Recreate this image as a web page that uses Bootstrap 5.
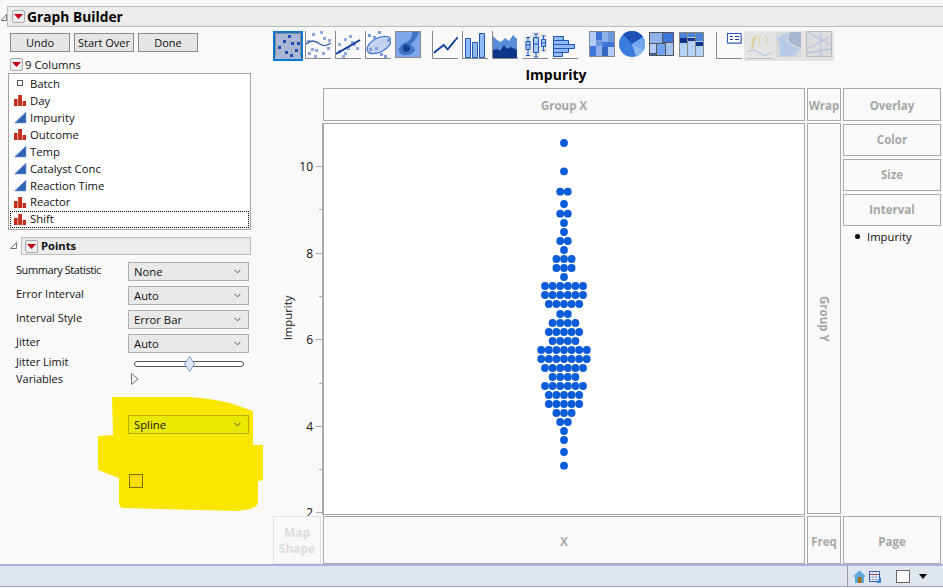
<!DOCTYPE html>
<html lang="en">
<head>
<meta charset="utf-8">
<title>Graph Builder</title>
<link href="https://cdn.jsdelivr.net/npm/bootstrap@5.3.0/dist/css/bootstrap.min.css" rel="stylesheet">
<style>
html,body{height:588px;overflow:hidden}
body{background:#f9f9f9;color:#111;font-family:"Open Sans","Noto Sans","Liberation Sans",sans-serif;font-size:11.3px;line-height:1.2}
.app-shell{height:588px;padding-top:6px}
.hdr-bar{height:21px;margin-left:7px;background:#ececec;border:1px solid #bdbdbd;border-right:0;gap:2px;padding-left:4px;font-weight:700;font-size:13.8px;color:#000}
.hdr-name{padding-top:2px}
.hdr-wrap{position:relative}
.hdr-tri{position:absolute;left:1px;top:8px}
.menu-btn{width:13px;height:13px;background:#eee;border:1px solid #aaa;border-radius:2px;flex:none}
.main-row{height:537px}
.left-pane{width:273px;flex:none;position:relative}
.act-btn{width:60px;height:19px;padding:0;background:#e6e6e6;border:1px solid #8a8a8a;border-radius:0;color:#111;font-size:11px;line-height:16px}
.act-row{padding:6px 0 0 10px;gap:4px}
.col-title{margin:6px 0 2px 10px;height:13px;gap:2px}
.col-list{margin-left:8px;width:243px;height:157px;background:#fff;border:1px solid #a5a5a5;border-radius:0;padding:1.5px 1px}
.col-list .list-group-item{background:transparent;border:0;height:17.2px;padding:0 0 0 4px;gap:3px;color:#111;font-size:11.3px;border-radius:0}
.col-list .list-group-item svg{width:13px;height:13px;flex:none}
.col-list .list-group-item.is-focus{outline:1px dotted #000;outline-offset:-1px}
.pts-wrap{position:relative;margin:7px 0 7px 21px;width:230px}
.pts-head{height:18px;background:#ececec;border:1px solid #bdbdbd;padding-left:3px;gap:3px;font-weight:700;font-size:11.2px}
.pts-tri{position:absolute;left:-11px;top:5px}
.opt-row{height:19px;margin:0 0 5px 16px;width:233px}
.opt-label{width:112px;flex:none;margin-top:-3px;font-size:11px}
.opt-label.tight-label{letter-spacing:-.42px}
.jmp-select{width:121px;height:19px;padding:0 0 0 5px;background-color:#e9e9e9;border:1px solid #adadad;border-radius:0;font-size:11.3px;color:#111;background-position:right 7px center;background-size:7px;line-height:17px}
.jmp-select.on-yellow{background-color:#e8e800;border-color:#b7ad00;position:relative}
.slide-row{height:17px;margin:-5px 0 0 16px}
.slide-track{margin:5px 0 0 6px;width:110px;height:6px;background:#fff;border:1px solid #555;border-radius:3px;position:relative}
.slide-thumb{position:absolute;left:49px;top:-6px}
.var-row{height:17px;margin-left:16px}
.var-label{width:115px}
.yellow-mark{position:absolute;left:0;top:0;width:273px;height:537px}
.spline-row{position:relative;margin:28px 0 0 128px}
.box-check{position:relative;display:block;width:14px;height:14px;margin:40px 0 0 129px;background:#fbdc00;border:1px solid #7c7000}
.tool-row{padding-top:4px;height:34px}
.tool-row svg{flex:none;display:block;width:26px;height:28px}
.tool-row .sel-tool{width:30px;height:30px;margin-right:2px}
.tool-row .g4{margin-left:4px}
.tool-row .g11{margin-left:11px}
.off-tools{background:#e4e4e4;margin-left:2px;padding:0 2px;height:30px;gap:4px}
.chart-title{width:566px;height:27px;padding-top:2px;font-weight:700;font-size:14px;color:#000}
.chart-grid{display:grid;grid-template-columns:48px 482px 34px 98px;grid-template-rows:33px 391px 48px;gap:2px}
.drop-zone{border:1px solid #a9a9a9;color:#a6a6a6;font-weight:700;font-size:11.5px;background:#f9f9f9}
.drop-zone.is-off{border-color:#e3e3e3;color:#dcdcdc;text-align:center;line-height:16px;font-size:12px;padding-top:1px}
.lift-top{padding-top:2px}
.lift-low{padding-top:3px}
.side-stack{gap:3px;padding-top:1px}
.side-stack .drop-zone{height:32px}
.legend-line{margin:1px 0 0 12px;gap:7px}
.legend-dot{width:5px;height:5px;border-radius:50%;background:#000}
.vert-text{writing-mode:vertical-rl}
.plot-frame{background:#fff;border:1px solid #a9a9a9;margin-bottom:-1px}
.plot-frame svg,.axis-svg{display:block;overflow:visible}
.axis-svg text{font-family:"Open Sans","Noto Sans",sans-serif;font-size:12px;fill:#111}
.axis-svg .axis-name{font-size:11.3px}
.status-bar{height:23px;background:#e0e6f0;border-top:2px solid #aab2da;border-bottom:1px solid #aaa}
.stat-sep{border-left:1px solid #999;height:21px;margin-left:847px;padding-left:5px;gap:3px}
.white-sq{width:14px;height:13px;background:#fff;border:1px solid #666;margin-left:12px}
.down-blk{margin-left:6px}
.grip-mark{margin-left:12px;margin-top:8px}
</style>
</head>
<body>
<div class="app-shell d-flex flex-column">
  <div class="hdr-wrap">
    <svg class="hdr-tri" width="6" height="7" viewBox="0 0 6 7"><path d="M0 6.5H5.5V.5Z" fill="#f4f4f4" stroke="#777"/></svg>
    <div class="hdr-bar d-flex align-items-center">
      <span class="menu-btn d-flex align-items-center justify-content-center"><svg width="9" height="5" viewBox="0 0 9 5"><path d="M0 0H9L4.5 5Z" fill="#c00010"/></svg></span>
      <span class="hdr-name">Graph Builder</span>
    </div>
  </div>
  <div class="main-row d-flex">
    <div class="left-pane">
      <svg class="yellow-mark" viewBox="0 27 273 537"><path d="M112 397L190 397Q215 399 230 403L253 411V445H263V480L258 481V503Q256 508 250 509L237 511L123 508Q119 507 119 503V478L98 470V436L113 435Z" fill="#f9e700"/></svg>
      <div class="act-row d-flex position-relative">
        <button class="btn act-btn">Undo</button>
        <button class="btn act-btn">Start Over</button>
        <button class="btn act-btn">Done</button>
      </div>
      <div class="col-title d-flex align-items-center">
        <span class="menu-btn d-flex align-items-center justify-content-center"><svg width="9" height="5" viewBox="0 0 9 5"><path d="M0 0H9L4.5 5Z" fill="#c00010"/></svg></span>
        <span>9 Columns</span>
      </div>
      <div class="list-group col-list">
        <div class="list-group-item d-flex align-items-center"><svg viewBox="0 0 13 13"><rect x="3.5" y="3.5" width="5" height="5" fill="#fff" stroke="#555"/></svg>Batch</div>
        <div class="list-group-item d-flex align-items-center"><svg viewBox="0 0 13 13"><path d="M0 5H3.6V12H0ZM4.2 1H8V12H4.2ZM8.6 7H12V12H8.6Z" fill="#c2301a"/></svg>Day</div>
        <div class="list-group-item d-flex align-items-center"><svg viewBox="0 0 13 13"><path d="M.5 12L12 1V12Z" fill="#2f65b5" stroke="#7d9fd8" stroke-width=".6"/></svg>Impurity</div>
        <div class="list-group-item d-flex align-items-center"><svg viewBox="0 0 13 13"><path d="M0 5H3.6V12H0ZM4.2 1H8V12H4.2ZM8.6 7H12V12H8.6Z" fill="#c2301a"/></svg>Outcome</div>
        <div class="list-group-item d-flex align-items-center"><svg viewBox="0 0 13 13"><path d="M.5 12L12 1V12Z" fill="#2f65b5" stroke="#7d9fd8" stroke-width=".6"/></svg>Temp</div>
        <div class="list-group-item d-flex align-items-center"><svg viewBox="0 0 13 13"><path d="M.5 12L12 1V12Z" fill="#2f65b5" stroke="#7d9fd8" stroke-width=".6"/></svg>Catalyst Conc</div>
        <div class="list-group-item d-flex align-items-center"><svg viewBox="0 0 13 13"><path d="M.5 12L12 1V12Z" fill="#2f65b5" stroke="#7d9fd8" stroke-width=".6"/></svg>Reaction Time</div>
        <div class="list-group-item d-flex align-items-center"><svg viewBox="0 0 13 13"><path d="M0 5H3.6V12H0ZM4.2 1H8V12H4.2ZM8.6 7H12V12H8.6Z" fill="#c2301a"/></svg>Reactor</div>
        <div class="list-group-item is-focus d-flex align-items-center"><svg viewBox="0 0 13 13"><path d="M0 5H3.6V12H0ZM4.2 1H8V12H4.2ZM8.6 7H12V12H8.6Z" fill="#c2301a"/></svg>Shift</div>
      </div>
      <div class="pts-wrap">
        <svg class="pts-tri" width="7" height="7" viewBox="0 0 7 7"><path d="M.5 6.5H6.5V.5Z" fill="#f4f4f4" stroke="#777"/></svg>
        <div class="pts-head d-flex align-items-center">
          <span class="menu-btn d-flex align-items-center justify-content-center"><svg width="9" height="5" viewBox="0 0 9 5"><path d="M0 0H9L4.5 5Z" fill="#c00010"/></svg></span>
          <span>Points</span>
        </div>
      </div>
      <div class="opt-row d-flex align-items-center position-relative"><span class="opt-label tight-label">Summary Statistic</span><select class="form-select jmp-select"><option>None</option></select></div>
      <div class="opt-row d-flex align-items-center position-relative"><span class="opt-label">Error Interval</span><select class="form-select jmp-select"><option>Auto</option></select></div>
      <div class="opt-row d-flex align-items-center position-relative"><span class="opt-label">Interval Style</span><select class="form-select jmp-select"><option>Error Bar</option></select></div>
      <div class="opt-row d-flex align-items-center position-relative"><span class="opt-label">Jitter</span><select class="form-select jmp-select"><option>Auto</option></select></div>
      <div class="slide-row d-flex align-items-center">
        <span class="opt-label m-0">Jitter Limit</span>
        <div class="slide-track"><svg class="slide-thumb" width="11" height="16" viewBox="0 0 11 16"><path d="M5.5 .5L10.5 8L5.5 15.5L.5 8Z" fill="#dce8f6" stroke="#7f9cc4"/></svg></div>
      </div>
      <div class="var-row d-flex align-items-center">
        <span class="opt-label var-label m-0">Variables</span>
        <svg width="8" height="12" viewBox="0 0 8 12"><path d="M.5 .5L7 6L.5 11.5Z" fill="#f4f4f4" stroke="#777"/></svg>
      </div>
      <div class="spline-row"><select class="form-select jmp-select on-yellow"><option>Spline</option></select></div>
      <span class="box-check"></span>
    </div>
    <div class="right-pane flex-grow-1">
      <div class="tool-row d-flex">
        <svg class="sel-tool" viewBox="0 0 30 30"><rect x="1" y="1" width="28" height="28" fill="#a9b6d6" stroke="#0a78d0" stroke-width="2"/><path d="M2.5 26.5V2.5H27.5V26.5" fill="none" stroke="#8a8a8a"/><path d="M15 4h3v3h-3zM10 9h3v3h-3zM18 11h3v3h-3zM24 11h3v3h-3zM5 15h3v3H5zM22 18h3v3h-3zM12 20h3v3h-3zM17 23h3v3h-3z" fill="#1d4fb0"/></svg>
        <svg viewBox="0 0 26 28"><path d="M.5 0V27.5H26" fill="none" stroke="#888"/><path d="M7 2h3v3H7zM15 0h3v3h-3zM18 6h3v3h-3zM23 8h3v3h-3zM2 9h3v3H2zM10 18h3v3h-3zM17 21h3v3h-3zM6 17h3v3H6zM9 24h3v3H9zM22 16h3v3h-3zM3 21h3v3H3z" fill="#8fa9de"/><path d="M1 13C6 8 11 10 15 13S22 15 26 12" fill="none" stroke="#3c62a8" stroke-width="1.3"/></svg>
        <svg class="g4" viewBox="0 0 26 28"><path d="M.5 0V27.5H26" fill="none" stroke="#888"/><path d="M14 4h3v3h-3zM9 7h3v3H9zM18 12h3v3h-3zM3 12h3v3H3zM12 16h3v3h-3zM21 16h3v3h-3zM9 21h3v3H9zM7 24h3v3H7zM3 19h3v3H3zM16 10h3v3h-3z" fill="#8fa9de"/><path d="M1 23L25 9" stroke="#0c3b9c" stroke-width="2"/></svg>
        <svg class="g4" viewBox="0 0 26 28"><path d="M.5 0V27.5H26" fill="none" stroke="#888"/><ellipse cx="14" cy="14" rx="13" ry="7" transform="rotate(-28 14 14)" fill="#c2d3f2" stroke="#3d73d0" stroke-width="1.2"/><path d="M13 0h3v3h-3zM3 3h3v3H3zM8 5h3v3H8zM22 8h3v3h-3zM10 16h3v3h-3zM15 22h3v3h-3zM19 24h3v3h-3zM4 17h3v3H4z" fill="#7f9bd8"/></svg>
        <svg class="g4" viewBox="0 0 26 28"><rect x=".5" y=".5" width="25" height="26" fill="#7ea7ea" stroke="#8a8a8a"/><path d="M17 1C17 7 15 9 12 11C6 13 3 17 4 21C7 26 17 25 20 19C19 15 16 15 16 13C18 11 22 8 24 1Z" fill="#3f74c6"/><path d="M10 13C7 15 7 20 11 21C15 21 16 17 14 15Z" fill="#123f8f"/></svg>
        <svg class="g11" viewBox="0 0 26 28"><path d="M.5 0V27.5H26" fill="none" stroke="#888"/><path d="M2 21.7L11.7 14L15.7 18.3L25.7 6.3" fill="none" stroke="#0c3b9c" stroke-width="1.8"/></svg>
        <svg class="g4" viewBox="0 0 26 28"><path d="M.5 0V27.5H26" fill="none" stroke="#888"/><path d="M3.5 7.5h5v19h-5zM10.5 11.5h5v15h-5zM17.5 2.5h5v24h-5z" fill="#93baf5" stroke="#1d58b8"/></svg>
        <svg class="g4" viewBox="0 0 26 28"><path d="M.5 0V27.5H26" fill="none" stroke="#888"/><path d="M1 5L5 9L9 11L13 7L17 10L21 4L25 8V27H1Z" fill="#5a8ed8"/><path d="M1 19L5 18L8 20L12 14L15 18L19 16L25 19V27H1Z" fill="#0c3488"/></svg>
        <svg class="g4" viewBox="0 0 26 28"><path d="M2 5h9v21H2zM10 1h8v25h-8zM18 3h7v19h-7z" fill="#e6e6e6"/><path d="M.5 27.5H26" stroke="#888"/><path d="M6 6.7V24.7M14 3V26M21.5 5V19.7M4 6.5H8M4 24.5H8M12 3H16M12 26H16M20 5H23M20 19.5H23" stroke="#1d58b8" fill="none"/><path d="M4 10.5h4v8H4zM11.5 6.5h5v15h-5zM19.5 8.5h4v7h-4z" fill="#a7c6f5" stroke="#1d58b8"/><path d="M4 14H8M11 13H17M19 12H24" stroke="#1d58b8"/></svg>
        <svg class="g4" viewBox="0 0 26 28"><path d="M.5 27.5H26" fill="none" stroke="#888"/><path d="M1.5 5.5h10v4h-10zM1.5 9.5h15v4h-15zM1.5 13.5h21v4h-21zM1.5 17.5h15v4h-15zM1.5 21.5h9v4h-9z" fill="#93baf5" stroke="#1d58b8"/></svg>
        <svg class="g11" viewBox="0 0 26 28"><rect width="26" height="26" fill="#8a8a8a"/><path d="M1 1h6v8H1z" fill="#b4cdf8"/><path d="M7 1h6v8H7z" fill="#3d76d8"/><path d="M13 1h6v10h-6z" fill="#8fb0ea"/><path d="M19 1h6v10h-6z" fill="#6f97dc"/><path d="M1 9h6v6H1z" fill="#b4cdf8"/><path d="M7 9h6v6H7z" fill="#6f97dc"/><path d="M13 11h6v5h-6zM19 11h6v5h-6z" fill="#3d76d8"/><path d="M1 15h6v10H1z" fill="#3d76d8"/><path d="M7 15h6v10H7z" fill="#8fb0ea"/><path d="M13 16h6v9h-6z" fill="#3468c0"/><path d="M19 16h6v9h-6z" fill="#b4cdf8"/></svg>
        <svg class="g4" viewBox="0 0 26 28"><circle cx="13" cy="13" r="13" fill="#3a7be0"/><path d="M13 13L4 3.5A13 13 0 0 1 24 6Z" fill="#1c52b8"/><path d="M13 13L24 6A13 13 0 0 1 25 19Z" fill="#6ea5ec"/><path d="M13 13L25 19A13 13 0 0 1 17 25.5Z" fill="#8eb8f4"/></svg>
        <svg class="g4" viewBox="0 0 26 28"><rect y="1" width="25" height="24" fill="#555"/><path d="M1 2h12v10H1z" fill="#8fb4ec"/><path d="M14 2h10v9H14z" fill="#3d76d8"/><path d="M1 13h6v9H1z" fill="#b4cdf8"/><path d="M1 23h6v1H1z" fill="#3468c0"/><path d="M8 13h8v11H8z" fill="#6da4f5"/><path d="M17 12h7v12h-7z" fill="#a4c3f3"/></svg>
        <svg class="g4" viewBox="0 0 26 28"><rect y="1" width="25" height="25" fill="#888"/><path d="M1 2h7v23H1zM9 2h7v23H9zM17 2h7v23h-7z" fill="#b4cff8"/><path d="M1 2h7v5H1zM9 2h7v4H9zM17 2h7v8h-7z" fill="#4a82d8"/><path d="M1 7h7v5H1zM9 7h7v3H9zM17 11h7v4h-7z" fill="#0c3488"/></svg>
        <svg class="g11" viewBox="0 0 26 28"><path d="M.5 1V27.5H26" fill="none" stroke="#888"/><rect x="12" y="3" width="14" height="10" fill="#a9b4c8"/><rect x="11.5" y="2.5" width="13.5" height="9.5" fill="#fff" stroke="#2a5cc0"/><path d="M14 5h3v1h-3zM14 8h3v1h-3zM19 5h4v1h-4zM19 8h4v1h-4z" fill="#1d3f90"/></svg>
        <div class="off-tools d-flex">
          <svg viewBox="0 0 26 28"><path d="M.5 27.5H26" stroke="#bbb"/><path d="M1 21C7 18 11 20 15 23S23 23 26 21" fill="none" stroke="#a8bcdc"/><text x="5" y="15" font-family="Liberation Serif,serif" font-style="italic" font-weight="700" font-size="15" fill="#dccb96">f</text><text x="12" y="12" font-family="Liberation Sans,sans-serif" font-size="10" fill="#dccb96">(·)</text></svg>
          <svg viewBox="0 0 26 28"><rect y="1" width="25" height="25" fill="#d8d8d8"/><path d="M0 8L8 2H14L11 10L16 14L25 18L19 26H3V14Z" fill="#b9cae6" stroke="#ddd"/><path d="M14 1H25V17L16 13L12 9Z" fill="#a8b6d2"/></svg>
          <svg viewBox="0 0 26 28"><rect x=".5" y=".5" width="25" height="25" fill="#dcdcdc" stroke="#bbb"/><path d="M1 1L25 14M25 5L1 18M15 1V25M1 22L25 18" stroke="#b6c6e2" stroke-width="1.3" fill="none"/></svg>
        </div>
      </div>
      <div class="chart-title d-flex align-items-center justify-content-center">Impurity</div>
      <div class="chart-grid">
        <div></div>
        <div class="drop-zone lift-top d-flex align-items-center justify-content-center">Group X</div>
        <div class="drop-zone lift-top d-flex align-items-center justify-content-center">Wrap</div>
        <div class="drop-zone lift-top d-flex align-items-center justify-content-center">Overlay</div>
        <svg class="axis-svg" width="48" height="391" viewBox="273 123 48 391">
          <path d="M322.5 123V515" stroke="#a9a9a9"/>
          <path d="M316 166.5H322M316 253.5H322M316 339.5H322M316 426.5H322M316 512.5H322M319 209.5H322M319 296.5H322M319 383.5H322M319 469.5H322" stroke="#a9a9a9"/>
          <text x="313" y="170.5" text-anchor="end">10</text>
          <text x="313" y="257.5" text-anchor="end">8</text>
          <text x="313" y="343.5" text-anchor="end">6</text>
          <text x="313" y="430.5" text-anchor="end">4</text>
          <text x="313" y="516.5" text-anchor="end">2</text>
          <text class="axis-name" transform="translate(292,318) rotate(-90)" text-anchor="middle">Impurity</text>
        </svg>
        <div class="plot-frame"><svg id="dotplot" width="480" height="390" viewBox="324 124 480 390"></svg></div>
        <div class="drop-zone d-flex align-items-center justify-content-center"><span class="vert-text">Group Y</span></div>
        <div class="side-stack d-flex flex-column">
          <div class="drop-zone d-flex align-items-center justify-content-center">Color</div>
          <div class="drop-zone d-flex align-items-center justify-content-center">Size</div>
          <div class="drop-zone d-flex align-items-center justify-content-center">Interval</div>
          <div class="legend-line d-flex align-items-center"><span class="legend-dot"></span><span>Impurity</span></div>
        </div>
        <div class="drop-zone is-off d-flex align-items-center justify-content-center">Map<br>Shape</div>
        <div class="drop-zone lift-low d-flex align-items-center justify-content-center">X</div>
        <div class="drop-zone lift-low d-flex align-items-center justify-content-center">Freq</div>
        <div class="drop-zone lift-low d-flex align-items-center justify-content-center">Page</div>
      </div>
    </div>
  </div>
  <div class="status-bar d-flex">
    <div class="stat-sep d-flex align-items-center">
      <svg width="13" height="13" viewBox="0 0 13 13"><path d="M0 6.5L6.5 .5L13 6.5H11V13H2V6.5Z" fill="#5aa9dc"/><rect x="5" y="7" width="3.5" height="6" fill="#a86a10"/></svg>
      <svg width="12" height="12" viewBox="0 0 12 12"><rect x=".5" y=".5" width="10" height="10" fill="#fff" stroke="#3a5cb0"/><path d="M1 3.5H10" stroke="#c03030"/><path d="M4 1V10M7 1V10M1 6H10M1 8.5H10" stroke="#7d93cf" stroke-width=".7"/><path d="M7 7L12 12M12 6V12H7" fill="#3a8ad8"/></svg>
      <span class="white-sq"></span>
      <svg class="down-blk" width="8" height="5" viewBox="0 0 8 5"><path d="M0 0H8L4 5Z" fill="#000"/></svg>
      <svg class="grip-mark" width="9" height="9" viewBox="0 0 9 9"><path d="M7 0h1v1H7zM4 3h1v1H4zM7 3h1v1H7zM1 6h1v1H1zM4 6h1v1H4zM7 6h1v1H7z" fill="#999"/></svg>
    </div>
  </div>
</div>
<script>
var rows=[[143,1],[171.3,1],[191.7,2],[204,1],[213.7,2],[223,1],[232,1],[241,2],[250,1],[259,3],[268,3],[277,1],[286,6],[295,6],[304,5],[314,2],[323,4],[332,5],[341,4],[350,7],[359,7],[368,6],[377,4],[386,6],[395,5],[404,5],[413,3],[422,2],[431,1],[440,1],[452,1],[465.7,1]];
var s=document.getElementById('dotplot'),h='';
rows.forEach(function(r){for(var i=0;i<r[1];i++){h+='<circle cx="'+(564+(i-(r[1]-1)/2)*7.6)+'" cy="'+r[0]+'" r="3.9" fill="#0a5cd8"/>';}});
s.innerHTML=h;
</script>
<script src="https://cdn.jsdelivr.net/npm/bootstrap@5.3.0/dist/js/bootstrap.bundle.min.js"></script>
</body>
</html>
